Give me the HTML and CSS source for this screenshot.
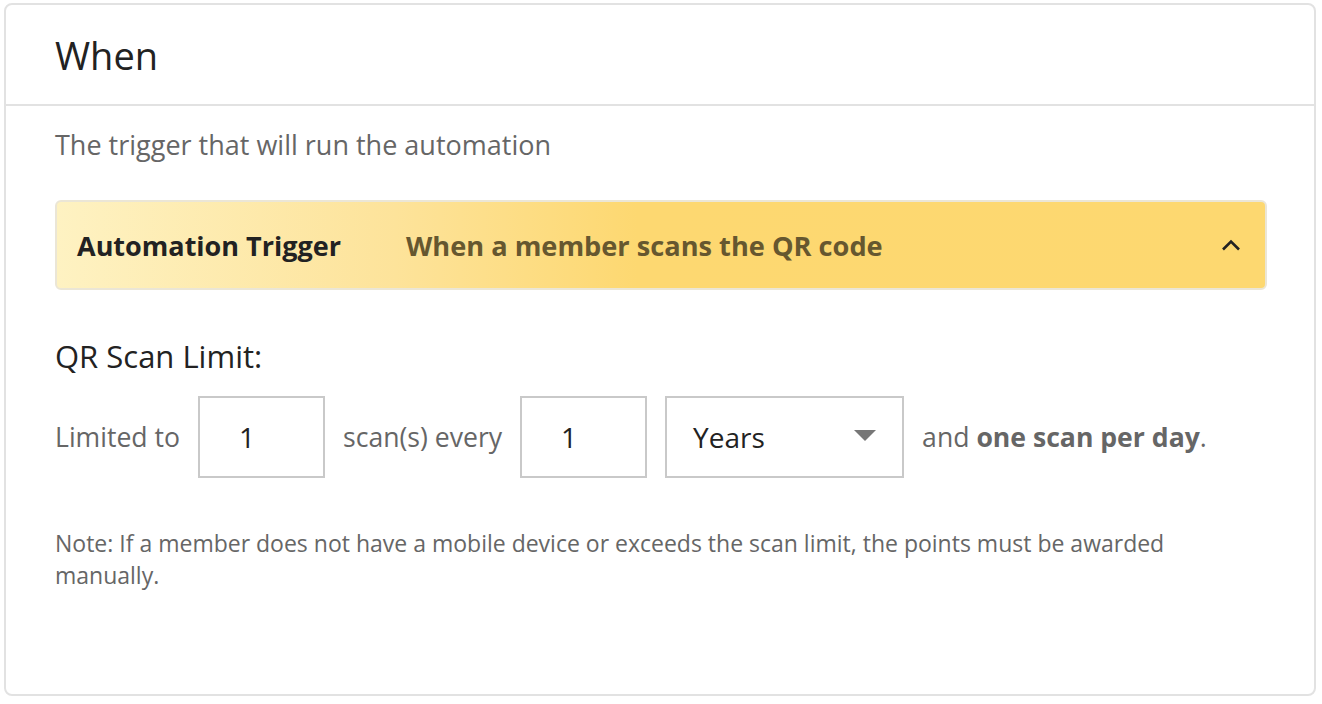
FILE: index.html
```html
<!DOCTYPE html>
<html lang="en">
<head>
<meta charset="utf-8">
<title>When</title>
<link rel="stylesheet" href="styles.css">
</head>
<body>
<section class="card">
  <header class="card-header">
    <h2 class="card-title">When</h2>
  </header>
  <div class="card-body">
    <p class="subtitle">The trigger that will run the automation</p>
    <div class="trigger">
      <span class="trigger-label">Automation Trigger</span>
      <span class="trigger-value">When a member scans the QR code</span>
      <svg class="chevron" width="20" height="12" viewBox="0 0 20 12" aria-hidden="true">
        <path d="M2 10.5 L10 2.5 L18 10.5" fill="none" stroke="#222" stroke-width="2.6"/>
      </svg>
    </div>
    <h3 class="limit-title">QR Scan Limit:</h3>
    <div class="limit-row">
      <span class="limit-text">Limited to</span>
      <div class="num-input">1</div>
      <span class="limit-text">scan(s) every</span>
      <div class="num-input">1</div>
      <div class="select">
        <span>Years</span>
        <svg class="caret" width="22" height="11" viewBox="0 0 22 11" aria-hidden="true">
          <path d="M0 0 L22 0 L11 11 Z" fill="#777"/>
        </svg>
      </div>
      <span class="limit-text">and <strong>one scan per day</strong>.</span>
    </div>
    <p class="note">Note: If a member does not have a mobile device or exceeds the scan limit, the points must be awarded<br>manually.</p>
  </div>
</section>
</body>
</html>
```
FILE: styles.css
```css
html, body {
  margin: 0;
  padding: 0;
  background: #fff;
}
body {
  font-family: "Open Sans", "Liberation Sans", sans-serif;
  color: #222;
  padding: 3px 6px 4px 4px;
}
.card {
  border: 2px solid #e2e2e2;
  border-radius: 8px;
  height: 693px;
  box-sizing: border-box;
}
.card-header {
  height: 101px;
  box-sizing: border-box;
  border-bottom: 2px solid #e2e2e2;
  padding: 0 49px;
  display: flex;
  align-items: center;
}
.card-title {
  margin: 0;
  font-size: 38px;
  font-weight: 400;
  color: #222;
}
.card-body {
  padding: 0 47px 0 49px;
}
.subtitle {
  margin: 0;
  padding-top: 24px;
  height: 70px;
  font-size: 27px;
  line-height: 30px;
  color: #666;
}
.trigger {
  height: 90px;
  box-sizing: border-box;
  border: 2px solid #ebe6d6;
  border-radius: 6px;
  background: linear-gradient(90deg, #fef2c2 0%, #fde39a 28%, #fdd871 48%, #fdd870 100%);
  display: flex;
  align-items: center;
  padding: 0 24px 0 20px;
}
.trigger-label {
  width: 329px;
  font-size: 27px;
  font-weight: 700;
  color: #222;
}
.trigger-value {
  flex: 1;
  font-size: 27.2px;
  font-weight: 700;
  color: #66572f;
}
.chevron {
  display: block;
}
.limit-title {
  margin: 0;
  padding-top: 48px;
  font-size: 31px;
  line-height: 36px;
  font-weight: 400;
  color: #222;
}
.limit-row {
  margin-top: 22px;
  display: flex;
  align-items: center;
  gap: 18px;
}
.limit-text {
  font-size: 26.6px;
  color: #666;
}
.limit-text strong {
  font-weight: 700;
}
.num-input {
  width: 127px;
  height: 82px;
  box-sizing: border-box;
  border: 2px solid #c9c9c9;
  padding-left: 39px;
  display: flex;
  align-items: center;
  font-size: 28px;
  color: #222;
}
.select {
  width: 239px;
  height: 82px;
  box-sizing: border-box;
  border: 2px solid #c9c9c9;
  padding: 0 26px 0 26px;
  display: flex;
  align-items: center;
  justify-content: space-between;
  font-size: 28px;
  color: #222;
}
.caret {
  display: block;
  margin-top: -4px;
}
.note {
  margin: 49px 0 0;
  font-size: 23px;
  line-height: 32px;
  color: #666;
}
```
